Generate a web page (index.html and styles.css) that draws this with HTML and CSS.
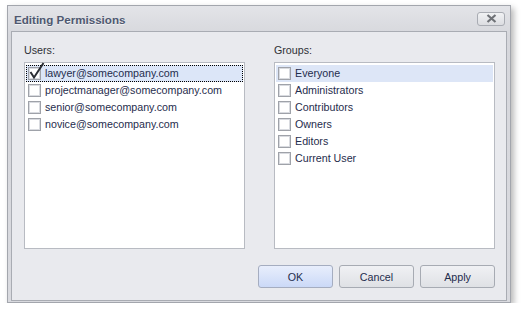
FILE: index.html
```html
<!DOCTYPE html>
<html>
<head>
<meta charset="utf-8">
<link rel="stylesheet" href="styles.css">
</head>
<body>
<div class="window">
  <div class="titlebar">
    <span class="title">Editing Permissions</span>
    <span class="close"><svg width="11" height="9" viewBox="0 0 11 9"><path d="M1.5 1 L9.5 8 M9.5 1 L1.5 8" stroke="#6f7277" stroke-width="2.2" fill="none"/></svg></span>
  </div>
  <div class="panel">
    <div class="columns">
      <div class="col">
        <div class="label">Users:</div>
        <div class="list">
          <div class="row focused"><span class="cb checked"><svg class="tick" width="16" height="18" viewBox="0 0 16 18"><path d="M1.5 10 L5 15.5 L14.5 1" stroke="#2a2d33" stroke-width="2" fill="none"/></svg></span><span class="txt">lawyer@somecompany.com</span></div>
          <div class="row"><span class="cb"></span><span class="txt">projectmanager@somecompany.com</span></div>
          <div class="row"><span class="cb"></span><span class="txt">senior@somecompany.com</span></div>
          <div class="row"><span class="cb"></span><span class="txt">novice@somecompany.com</span></div>
        </div>
      </div>
      <div class="col">
        <div class="label">Groups:</div>
        <div class="list">
          <div class="row hot"><span class="cb"></span><span class="txt">Everyone</span></div>
          <div class="row"><span class="cb"></span><span class="txt">Administrators</span></div>
          <div class="row"><span class="cb"></span><span class="txt">Contributors</span></div>
          <div class="row"><span class="cb"></span><span class="txt">Owners</span></div>
          <div class="row"><span class="cb"></span><span class="txt">Editors</span></div>
          <div class="row"><span class="cb"></span><span class="txt">Current User</span></div>
        </div>
      </div>
    </div>
    <div class="buttons">
      <button class="btn primary">OK</button>
      <button class="btn">Cancel</button>
      <button class="btn">Apply</button>
    </div>
  </div>
</div>
</body>
</html>
```
FILE: styles.css
```css
html, body {
  margin: 0;
  padding: 0;
  background: #ffffff;
}
body {
  font-family: "Liberation Sans", Arial, sans-serif;
  font-size: 10.7px;
}
.window {
  margin: 5px 0 0 7px;
  border: 1px solid #a3a6ad;
  background: linear-gradient(#e3e4e8, #d6d7dc 30px, #d9dadf);
  padding: 0 3px 3px 3px;
  box-sizing: content-box;
  width: 496px;
  height: 293px;
  box-shadow: 3px 3px 6px rgba(0,0,0,0.28);
  display: flex;
  flex-direction: column;
}
.titlebar {
  height: 25px;
  flex: none;
  display: flex;
  align-items: center;
  justify-content: space-between;
  padding: 0 2px 0 3px;
}
.title {
  font-weight: bold;
  font-size: 11.6px;
  color: #4e5870;
  text-shadow: 0 1px 0 rgba(255,255,255,0.6);
  padding-top: 1px;
}
.close {
  width: 26px;
  height: 12px;
  border: 1px solid #a9acb3;
  border-radius: 3px;
  background: linear-gradient(#f1f2f4, #dcdde1);
  display: flex;
  align-items: center;
  justify-content: center;
}
.panel {
  flex: 1;
  border: 1px solid #a9acb3;
  background: #e9eaee;
  padding: 12px 11px 12px 12px;
  display: flex;
  flex-direction: column;
}
.columns {
  display: flex;
  gap: 29px;
}
.col {
  width: 221px;
  display: flex;
  flex-direction: column;
}
.label {
  line-height: 13px;
  height: 13px;
  color: #2f3136;
  margin-bottom: 5px;
}
.list {
  height: 183px;
  border: 1px solid #b8bbc2;
  background: #ffffff;
  padding: 1px 1px;
}
.row {
  height: 17px;
  display: flex;
  align-items: center;
  padding-left: 2px;
  box-sizing: border-box;
}
.row:first-child {
  margin-top: 1px;
}
.row.focused {
  background: #dce6f8;
  outline: 1px dotted #000000;
  outline-offset: -1px;
}
.row.hot {
  background: #dde6f7;
}
.cb {
  position: relative;
  width: 13px;
  height: 13px;
  box-sizing: border-box;
  border: 1px solid #9fa2a9;
  background: #ffffff;
  box-shadow: inset 0 0 0 1px #d9dbe0;
  flex: none;
  margin-right: 4px;
}
.tick {
  position: absolute;
  left: 0px;
  top: -6px;
}
.txt {
  color: #1f2d4d;
  line-height: 13px;
  white-space: nowrap;
}
.buttons {
  margin-top: 16px;
  display: flex;
  justify-content: flex-end;
  gap: 6px;
}
.btn {
  width: 75px;
  height: 23px;
  border: 1px solid #a7abb3;
  border-radius: 3px;
  background: linear-gradient(#f0f1f4, #dfe1e5);
  font-family: "Liberation Sans", Arial, sans-serif;
  font-size: 10.7px;
  color: #1f2d4d;
  padding: 0;
  margin: 0;
}
.btn.primary {
  background: linear-gradient(#e8eefc, #cbd9f7);
  border-color: #a5adc0;
}
```
